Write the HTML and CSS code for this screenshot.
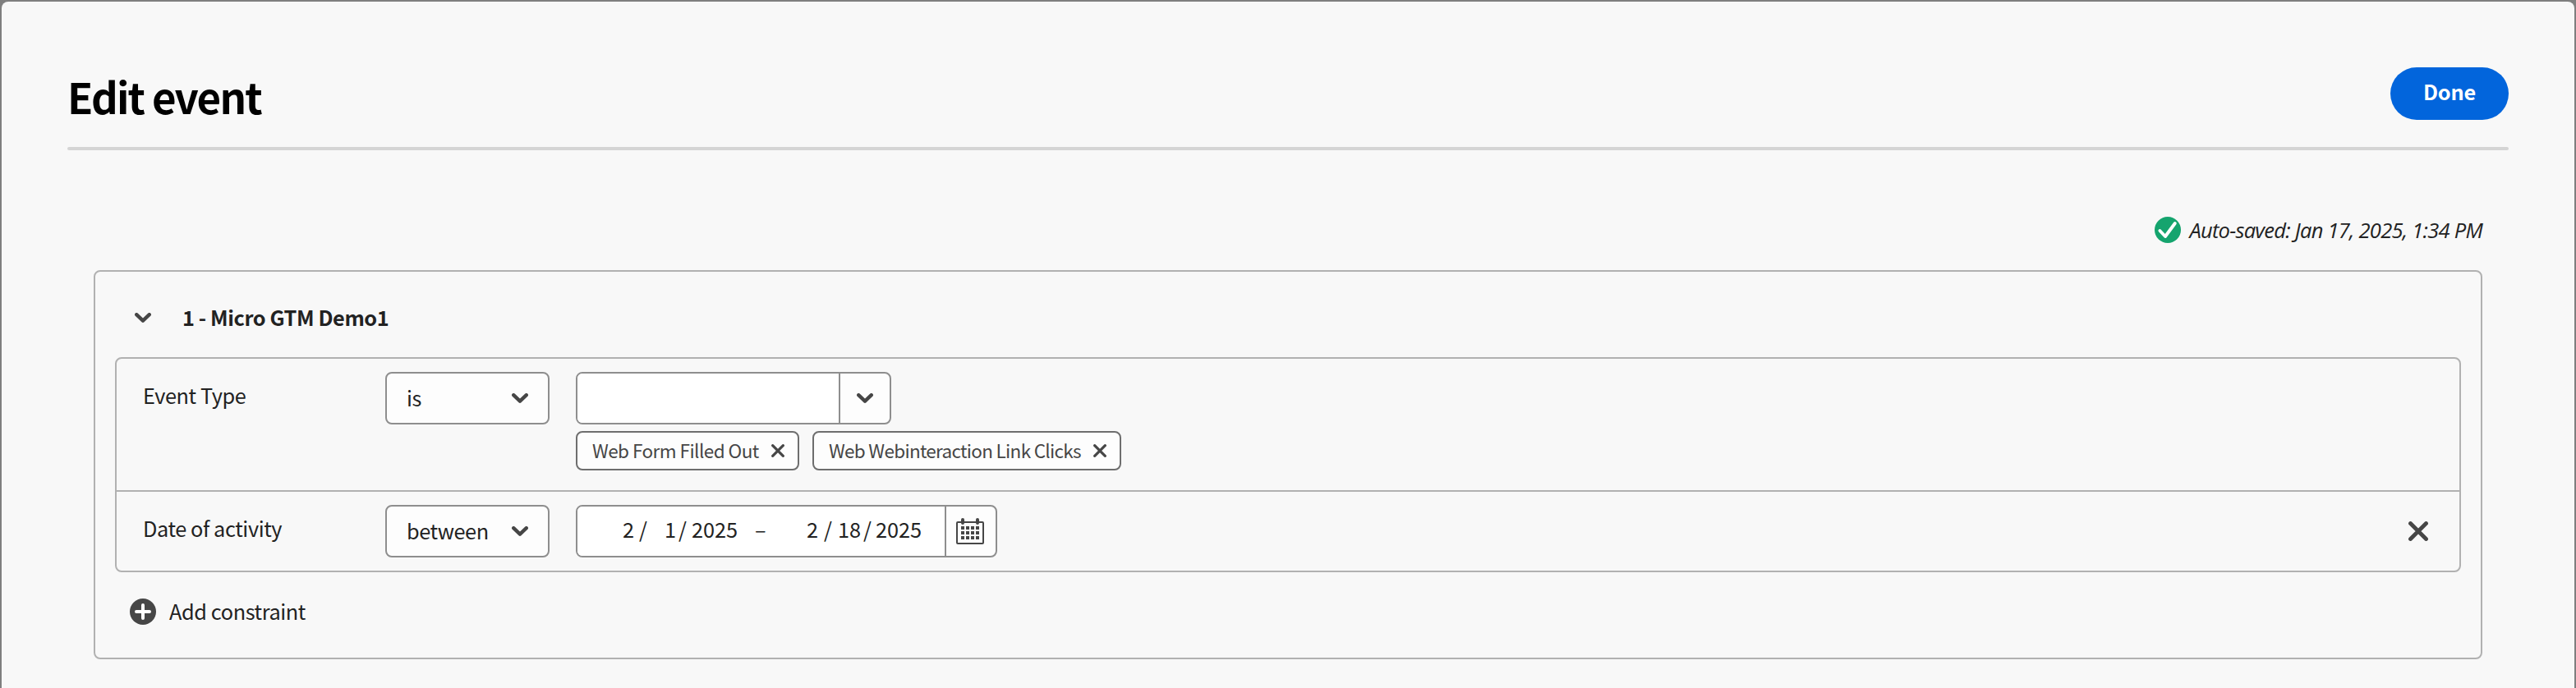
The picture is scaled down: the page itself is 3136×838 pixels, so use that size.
FILE: index.html
```html
<!DOCTYPE html>
<html lang="en">
<head>
<meta charset="utf-8">
<title>Edit event</title>
<link rel="stylesheet" href="styles.css">
</head>
<body>
<svg class="defs" aria-hidden="true">
  <symbol id="chevron" viewBox="0 0 20 12"><path d="M2.2 2.2 10 9.6l7.8-7.4" fill="none" stroke="#464646" stroke-width="4.4" stroke-linecap="round" stroke-linejoin="round"/></symbol>
  <symbol id="cross" viewBox="0 0 24 24"><path d="M2.5 2.5l19 19M21.5 2.5l-19 19" fill="none" stroke="#464646" stroke-width="4.8" stroke-linecap="round"/></symbol>
</svg>
<main class="page">
  <header class="header">
    <h1 class="header-title">Edit event</h1>
    <button class="done">Done</button>
  </header>
  <div class="divider"></div>
  <div class="content">
    <div class="status">
      <svg class="status-icon" viewBox="0 0 32 32"><circle cx="16" cy="16" r="16" fill="#15a46e"/><path d="M6.4 17l6.6 7L24.8 8" fill="none" stroke="#fff" stroke-width="3.9" stroke-linecap="round" stroke-linejoin="round"/></svg>
      <em class="status-text">Auto-saved: Jan 17, 2025, 1:34 PM</em>
    </div>
    <section class="panel">
      <div class="panel-head">
        <svg class="chevron"><use href="#chevron"/></svg>
        <h2 class="panel-title">1 - Micro GTM Demo1</h2>
      </div>
      <div class="constraints">
        <div class="row row-type">
          <div class="label">Event Type</div>
          <div class="select"><span class="select-text">is</span><svg class="chevron"><use href="#chevron"/></svg></div>
          <div class="values">
            <div class="combo">
              <div class="combo-input"></div>
              <div class="combo-button"><svg class="chevron"><use href="#chevron"/></svg></div>
            </div>
            <div class="tags">
              <div class="tag tag-form"><span class="tag-text">Web Form Filled Out</span><svg class="tag-x"><use href="#cross"/></svg></div>
              <div class="tag tag-link"><span class="tag-text">Web Webinteraction Link Clicks</span><svg class="tag-x"><use href="#cross"/></svg></div>
            </div>
          </div>
        </div>
        <div class="row row-date">
          <div class="label">Date of activity</div>
          <div class="select"><span class="select-text">between</span><svg class="chevron"><use href="#chevron"/></svg></div>
          <div class="date">
            <div class="date-input">
              <span>2</span><span>/</span><span>1</span><span>/</span><span>2025</span><span>–</span><span>2</span><span>/</span><span>18</span><span>/</span><span>2025</span>
            </div>
            <div class="date-button">
              <svg class="calendar" viewBox="0 0 34 32">
                <rect x="1" y="5" width="32" height="26" rx="1" fill="none" stroke="#464646" stroke-width="2"/>
                <path d="M8 2v4M26 2v4" stroke="#464646" stroke-width="4" stroke-linecap="round"/>
                <path d="M6 12h22M6 18h22M6 24h22" stroke="#464646" stroke-width="4" stroke-dasharray="4 2"/>
              </svg>
            </div>
          </div>
          <svg class="remove"><use href="#cross"/></svg>
        </div>
      </div>
      <div class="add">
        <svg class="add-icon" viewBox="0 0 32 32"><circle cx="16" cy="16" r="16" fill="#464646"/><path d="M16 8v16M8 16h16" stroke="#fff" stroke-width="4" stroke-linecap="round"/></svg>
        <span class="add-text">Add constraint</span>
      </div>
    </section>
  </div>
</main>
</body>
</html>
```
FILE: styles.css
```css
* { box-sizing: border-box; }
body {
  margin: 0;
  background: #7f7f7f;
  color: #222;
  font: 25.3px/32px "Noto Sans CJK SC", "Open Sans", sans-serif;
  letter-spacing: -0.4px;
  white-space: nowrap;
  overflow: hidden;
}
svg { display: block; flex: none; }
.defs { display: none; }
.page {
  height: 836px;
  margin: 2px 2px 0;
  padding: 0 80px;
  background: #f8f8f8;
  border-radius: 8px 8px 0 0;
}
.header {
  display: flex;
  justify-content: space-between;
  align-items: flex-start;
  height: 177px;
  padding-top: 80px;
}
.header-title {
  margin: 0;
  padding: 3px 0 0;
  font-size: 51px;
  line-height: 64px;
  font-weight: 700;
  letter-spacing: -1.85px;
  color: #000;
}
.done {
  width: 144px;
  height: 64px;
  padding: 0 0 6px;
  border: 0;
  border-radius: 32px;
  background: #0265dc;
  color: #fff;
  font: inherit;
  font-weight: 700;
  letter-spacing: -0.2px;
}
.divider { height: 4px; border-radius: 2px; background: #d5d5d5; }
.content { padding: 81px 32px 0; }
.status { display: flex; justify-content: flex-end; gap: 10px; height: 32px; }
.status-icon { width: 32px; height: 32px; }
.status-text { font-family: "Open Sans", sans-serif; font-size: 25.5px; letter-spacing: -0.74px; }
.panel { height: 474px; margin-top: 33px; border: 2px solid #b1b1b1; border-radius: 8px; }
.panel-head {
  display: flex;
  align-items: center;
  gap: 38px;
  height: 104px;
  padding: 8px 0 0 48px;
}
.chevron { width: 20px; height: 12px; }
.panel-title {
  margin: 0;
  padding-bottom: 2px;
  font-size: 25.3px;
  font-weight: 700;
  letter-spacing: -0.42px;
}
.constraints { margin: 0 24px; border: 2px solid #b1b1b1; border-radius: 8px; }
.row { display: flex; align-items: flex-start; padding: 16px 38px 0 32px; }
.row-type { height: 162px; border-bottom: 2px solid #b1b1b1; }
.row-date { height: 96px; }
.label { width: 295px; padding-top: 12px; }
.select {
  display: flex;
  align-items: center;
  justify-content: space-between;
  width: 200px;
  height: 64px;
  margin-right: 32px;
  padding: 0 24px;
  border: 2px solid #8e8e8e;
  border-radius: 8px;
  background: #fdfdfd;
}
.select-text { padding-bottom: 2px; }
.combo, .date {
  display: flex;
  height: 64px;
  border: 2px solid #8e8e8e;
  border-radius: 8px;
  background: #fdfdfd;
  overflow: hidden;
}
.combo { width: 384px; }
.combo-input { width: 320px; border-right: 2px solid #8e8e8e; background: #fff; }
.combo-button, .date-button { flex: 1; display: flex; align-items: center; justify-content: center; }
.date-button { padding-right: 2px; }
.tags { display: flex; gap: 16px; margin-top: 8px; }
.tag {
  display: flex;
  align-items: center;
  justify-content: space-between;
  height: 48px;
  padding: 0 16px 0 18px;
  border: 2px solid #6e6e6e;
  border-radius: 8px;
  background: #fdfdfd;
  color: #464646;
  font-size: 22.5px;
  letter-spacing: -0.55px;
}
.tag-form { width: 272px; }
.tag-link { width: 376px; letter-spacing: -0.7px; }
.tag-text { padding-bottom: 2px; }
.tag-x { width: 16px; height: 16px; }
.date { width: 513px; }
.date-input {
  display: grid;
  grid-template-columns: 20px 31px 17px 16px 77px 63px 21px 17px 31px 15px 1fr;
  align-items: center;
  width: 449px;
  padding: 0 0 6px 55px;
  border-right: 2px solid #8e8e8e;
  background: #fff;
  letter-spacing: 0;
}
.calendar { width: 34px; height: 32px; }
.remove { width: 24px; height: 24px; margin: 20px 0 0 auto; }
.add {
  display: flex;
  align-items: center;
  gap: 16px;
  height: 104px;
  padding: 0 0 8px 42px;
}
.add-icon { width: 32px; height: 32px; }
.add-text { padding-bottom: 2px; }
```
